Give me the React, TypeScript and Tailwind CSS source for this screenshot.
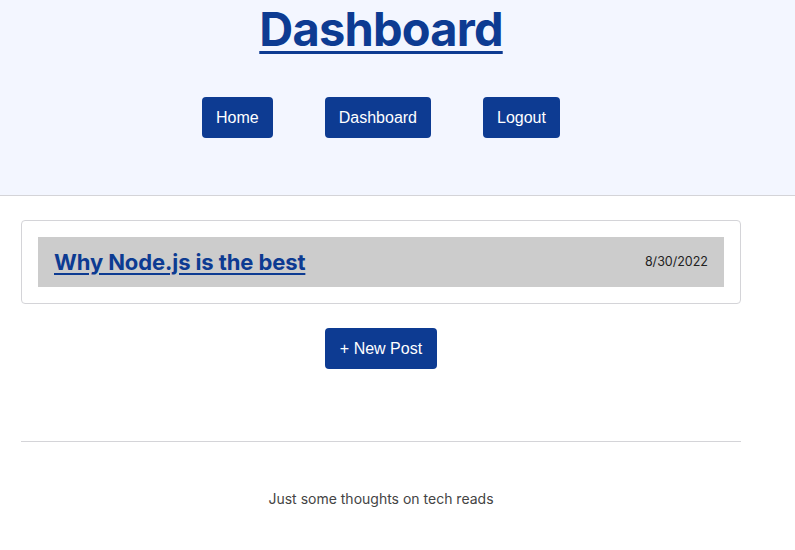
import React from "react";

const btn =
  "h-[41px] flex items-center px-[14px] rounded-[4px] bg-[#0d3b92] text-white text-[16px] font-['Liberation_Sans',Arial,sans-serif]";

export default function App() {
  return (
    <div className="min-h-[550px] bg-white font-['Inter',sans-serif]">
      <header className="w-full h-[196px] bg-[#f3f6ff] border-b border-[#d4d4d8]">
        <div className="w-[762px] flex flex-col items-center">
          <h1 className="text-[47px] font-bold leading-[58px] tracking-[-0.8px] text-[#0d3b92] underline decoration-[3px] underline-offset-[5px]">
            Dashboard
          </h1>
          <nav className="mt-[39px] flex gap-[52px]">
            <a className={btn}>Home</a>
            <a className={btn}>Dashboard</a>
            <a className={btn}>Logout</a>
          </nav>
        </div>
      </header>
      <main className="w-[762px] px-[21px] pt-[24px]">
        <div className="border border-[#d4d4d8] rounded-[4px] p-[16px]">
          <div className="h-[50px] bg-[#cccccc] flex items-center justify-between px-[16px]">
            <a className="text-[22px] font-bold text-[#0d3b92] underline underline-offset-[3px] tracking-[-0.1px]">
              Why Node.js is the best
            </a>
            <span className="text-[12.5px] text-[#222]">8/30/2022</span>
          </div>
        </div>
        <div className="flex justify-center mt-[24px]">
          <button className={btn + " px-[15px]"}>+ New Post</button>
        </div>
        <hr className="mt-[72px] border-t border-[#d4d4d8]" />
        <footer className="mt-[46px] text-center text-[14px] text-[#444]">
          Just some thoughts on tech reads
        </footer>
      </main>
    </div>
  );
}
